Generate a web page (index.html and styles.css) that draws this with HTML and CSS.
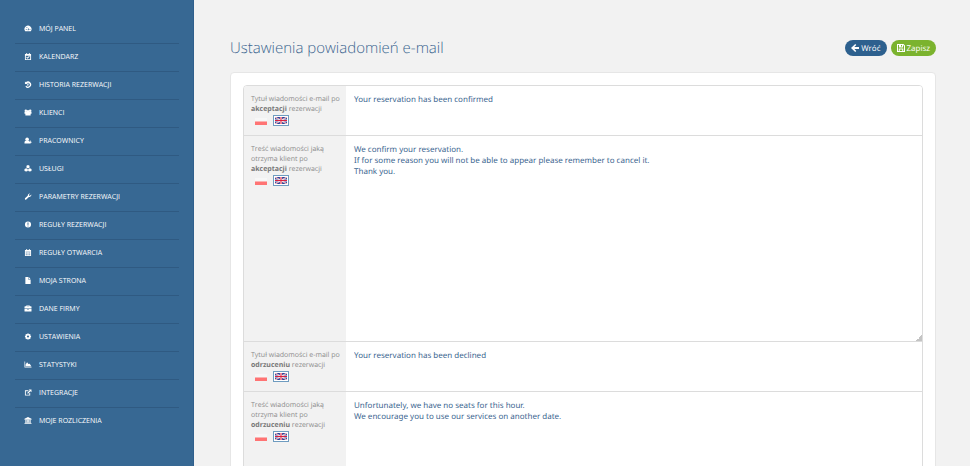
FILE: index.html
```html
<!DOCTYPE html>
<html lang="pl">
<head>
  <meta charset="UTF-8">
  <meta name="viewport" content="width=device-width, initial-scale=1.0">
  <title>Ustawienia powiadomień e-mail</title>
  <link rel="stylesheet" href="styles.css">
</head>
<body>
  <!-- Shared flags -->
  <svg class="defs" width="0" height="0" aria-hidden="true">
    <symbol id="flag-pl" viewBox="0 0 12 8" preserveAspectRatio="none">
      <path fill="#f7f7f7" d="M0 0h12v4H0z"/>
      <path fill="#ff7474" d="M0 4h12v4H0z"/>
    </symbol>
    <symbol id="flag-gb" viewBox="0 0 12 7">
      <path fill="#2b3f96" d="M0 0h12v7H0z"/>
      <path stroke="#fff" stroke-width="1.2" d="M0 0l12 7M12 0L0 7"/>
      <path stroke="#d83a55" stroke-width=".5" d="M0 0l12 7M12 0L0 7"/>
      <path stroke="#fff" stroke-width="2.2" d="M6 0v7M0 3.500h12"/>
      <path stroke="#d8203f" stroke-width="1.1" d="M6 0v7M0 3.500h12"/>
    </symbol>
  </svg>

  <div class="layout">
    <nav class="sidebar">
      <ul class="menu">
        <li><a href="#"><svg class="icon" viewBox="0 0 16 16"><path fill-rule="evenodd" d="M1.500 14A8 8 0 1 1 14.500 14zM7 12h2.500l1-6-3 4zM3 9v2h2V9zM4.500 5v2h2V5zM11.500 9v2h2V9z"/></svg>MÓJ PANEL</a></li>
        <li><a href="#"><svg class="icon" viewBox="0 0 16 16"><path fill-rule="evenodd" d="M1 2h3V0h2v2h4V0h2v2h3v14H1zM3 6v8h10V6zM4 10l1.500-1.500L7 10l3.500-3.500L12 8l-5 5z"/></svg>KALENDARZ</a></li>
        <li><a href="#"><svg class="icon" viewBox="0 0 16 16"><path d="M1 1l2 2A7.200 7.200 0 1 1 2 12.500l2.200-1.700A4.300 4.300 0 1 0 5.200 5.200L7 7H1zM7 5h2.200v5.200H5.500V8H7z"/></svg>HISTORIA REZERWACJI</a></li>
        <li><a href="#"><svg class="icon" viewBox="0 0 16 16"><circle cx="3" cy="4" r="2.800"/><circle cx="13" cy="4" r="2.800"/><circle cx="8" cy="6" r="3.700"/><path d="M0 6h16v5h-2v4H2v-4H0z"/></svg>KLIENCI</a></li>
        <li><a href="#"><svg class="icon" viewBox="0 0 16 16"><circle cx="6" cy="5" r="4"/><path d="M0 15v-3q0-4 4-4h4q3 0 3 3h1V8h2v3h2v2h-2v2z"/></svg>PRACOWNICY</a></li>
        <li><a href="#"><svg class="icon" viewBox="0 0 16 16"><path d="M8 0l3.500 1.500V6L8 7.500 4.500 6V1.500zM3.800 7.500L7.500 9v4.500L3.800 15 0 13.500V9zM12.200 7.500L16 9v4.500L12.200 15l-3.700-1.500V9z"/></svg>USŁUGI</a></li>
        <li><a href="#"><svg class="icon" viewBox="0 0 16 16"><path d="M1 12l6.500-6A4.700 4.700 0 0 1 13 1l-3 3 .5 2 2 .5 3-3A4.700 4.700 0 0 1 10 9l-6 6q-2 1-3-1z"/></svg>PARAMETRY REZERWACJI</a></li>
        <li><a href="#"><svg class="icon" viewBox="0 0 16 16"><path fill-rule="evenodd" d="M8 1a7 7 0 1 1 0 14A7 7 0 0 1 8 1zM6.800 3.500l.4 5.500h1.600l.4-5.500zM7 10.500v2h2v-2z"/></svg>REGUŁY REZERWACJI</a></li>
        <li><a href="#"><svg class="icon" viewBox="0 0 16 16"><path fill-rule="evenodd" d="M1 2h3V0h2v2h4V0h2v2h3v14H1zM2.500 5.500v1h11v-1zM3 8v2h2V8zM7 8v2h2V8zM11 8v2h2V8zM3 12v2h2v-2zM7 12v2h2v-2zM11 12v2h2v-2z"/></svg>REGUŁY OTWARCIA</a></li>
        <li><a href="#"><svg class="icon" viewBox="0 0 16 16"><path d="M2 0h7v6h5v10H2zM10 0l4 5h-4z"/></svg>MOJA STRONA</a></li>
        <li><a href="#"><svg class="icon" viewBox="0 0 16 16"><path fill-rule="evenodd" d="M4 3V1h8v2h3q1 0 1 1v4H0V4q0-1 1-1zM6 2.500V3h4v-.5zM0 9h6v1h4V9h6v5q0 1-1 1H1q-1 0-1-1z"/></svg>DANE FIRMY</a></li>
        <li><a href="#"><svg class="icon" viewBox="0 0 16 16"><path fill-rule="evenodd" d="M6.500 1h3l.5 2 2-1 2 2-1 2 2 .5v3l-2 .5 1 2-2 2-2-1-.5 2h-3L6 13l-2 1-2-2 1-2-2-.5v-3L3 6 2 4l2-2 2 1zM8 5.500a2.500 2.500 0 1 0 0 5 2.500 2.500 0 0 0 0-5z"/></svg>USTAWIENIA</a></li>
        <li><a href="#"><svg class="icon" viewBox="0 0 16 16"><path d="M0 1h1.500v12H16v2H0zM2.500 12V8L6 3l3 4 3-1 3.500 6z"/></svg>STATYSTYKI</a></li>
        <li><a href="#"><svg class="icon" viewBox="0 0 16 16"><path d="M9 3H1v12h12V9h-2v4H3V5h6zM9.500 1H16v6.500l-2.300-2.300L8 11 6 9l5.800-5.700z"/></svg>INTEGRACJE</a></li>
        <li><a href="#"><svg class="icon" viewBox="0 0 16 16"><path d="M8 0l8 4v2H0V4zM2 7h2.500v5h1V7H7.500v5h1V7h2v5h1V7H14v5h1v1H1v-1h1zM0 14h16v2H0z"/></svg>MOJE ROZLICZENIA</a></li>
      </ul>
    </nav>

    <main class="content">
      <header class="page-header">
        <h1>Ustawienia powiadomień e-mail</h1>
        <div class="actions">
          <button type="button" class="btn btn-back"><svg class="btn-icon" viewBox="0 0 16 16"><path d="M8.500 0L0 8l8.500 8 2-2-3.800-4H16V6H6.700l3.800-4z"/></svg>Wróć</button>
          <button type="submit" form="notifications" class="btn btn-save"><svg class="btn-icon" viewBox="0 0 16 16"><path fill-rule="evenodd" d="M0 0h13l3 3v13H0zM2 2v12h1.500V9h9v5H14V4l-2-2v5H4V2zM8 2v3h2V2zM5.500 11v3h5v-3z"/></svg>Zapisz</button>
        </div>
      </header>

      <form class="panel" id="notifications">
        <div class="fields">
          <div class="row">
            <div class="side">
              <label for="accept-title">Tytuł wiadomości e-mail po <b>akceptacji</b> rezerwacji</label>
              <div class="langs">
                <button type="button" class="lang" aria-label="Polski"><svg><use href="#flag-pl"/></svg></button>
                <button type="button" class="lang active" aria-label="English"><svg><use href="#flag-gb"/></svg></button>
              </div>
            </div>
            <input type="text" class="field" id="accept-title" value="Your reservation has been confirmed">
          </div>
          <div class="row">
            <div class="side">
              <label for="accept-body">Treść wiadomości jaką otrzyma klient po <b>akceptacji</b> rezerwacji</label>
              <div class="langs">
                <button type="button" class="lang" aria-label="Polski"><svg><use href="#flag-pl"/></svg></button>
                <button type="button" class="lang active" aria-label="English"><svg><use href="#flag-gb"/></svg></button>
              </div>
            </div>
            <textarea class="field" id="accept-body" rows="17">We confirm your reservation.
If for some reason you will not be able to appear please remember to cancel it.
Thank you.</textarea>
          </div>
          <div class="row">
            <div class="side">
              <label for="decline-title">Tytuł wiadomości e-mail po <b>odrzuceniu</b> rezerwacji</label>
              <div class="langs">
                <button type="button" class="lang" aria-label="Polski"><svg><use href="#flag-pl"/></svg></button>
                <button type="button" class="lang active" aria-label="English"><svg><use href="#flag-gb"/></svg></button>
              </div>
            </div>
            <input type="text" class="field" id="decline-title" value="Your reservation has been declined">
          </div>
          <div class="row">
            <div class="side">
              <label for="decline-body">Treść wiadomości jaką otrzyma klient po <b>odrzuceniu</b> rezerwacji</label>
              <div class="langs">
                <button type="button" class="lang" aria-label="Polski"><svg><use href="#flag-pl"/></svg></button>
                <button type="button" class="lang active" aria-label="English"><svg><use href="#flag-gb"/></svg></button>
              </div>
            </div>
            <textarea class="field" id="decline-body" rows="17">Unfortunately, we have no seats for this hour.
We encourage you to use our services on another date.</textarea>
          </div>
        </div>
      </form>
    </main>
  </div>
</body>
</html>
```
FILE: styles.css
```css
* {
  box-sizing: border-box;
}

body {
  margin: 0;
  font-family: 'Open Sans', sans-serif;
  text-rendering: geometricPrecision;
  background: #f2f2f2;
  color: #3c6690;
}

.defs {
  position: absolute;
}

.layout {
  display: flex;
  height: 100vh;
}

.sidebar {
  width: 20%;
  flex-shrink: 0;
  padding: 16px 14px 0 15px;
  background: #376893;
  border-right: 1px solid #2f5f8c;
}

.menu {
  margin: 0;
  padding: 0;
  list-style: none;
}

.menu li {
  height: 28px;
  border-bottom: 1px solid #2f5a82;
}

.menu li:last-child {
  border-bottom: none;
}

.menu a {
  display: flex;
  align-items: center;
  gap: 7px;
  height: 26px;
  padding: 2px 0 0 9px;
  color: #ffffff;
  font-size: 7px;
  line-height: 10px;
  text-decoration: none;
}

.icon {
  width: 8px;
  height: 7px;
  margin-bottom: 3px;
  fill: #ffffff;
}

.content {
  flex: 1;
  min-width: 0;
  padding: 36px 34px 0 36px;
  overflow: hidden;
}

.page-header {
  display: flex;
  justify-content: space-between;
  align-items: center;
  height: 24px;
  margin-bottom: 12px;
}

h1 {
  margin: 0;
  font-size: 15px;
  font-weight: 300;
  line-height: 22px;
}

.actions {
  display: flex;
  gap: 4px;
}

.btn {
  display: flex;
  align-items: center;
  gap: 2px;
  height: 16px;
  padding: 0 6px;
  border: none;
  border-radius: 8px;
  color: #ffffff;
  font-family: inherit;
  font-size: 8px;
  text-rendering: inherit;
  cursor: pointer;
}

.btn-back {
  background: #2d608e;
}

.btn-save {
  background: #7bb32e;
}

.btn-icon {
  width: 8px;
  height: 8px;
  fill: #ffffff;
}

.panel {
  padding: 12px;
  background: #ffffff;
  border: 1px solid #e6e6e6;
  border-radius: 4px;
}

.fields {
  border: 1px solid #dcdcdc;
  border-radius: 4px;
  overflow: hidden;
}

.row {
  display: flex;
  min-height: 50px;
  border-bottom: 1px solid #dcdcdc;
}

.row:last-child {
  border-bottom: none;
}

.side {
  width: 102px;
  flex-shrink: 0;
  padding: 9px 3px 0 7px;
  background: #f2f2f2;
  color: #8c8c8c;
  font-size: 7px;
  line-height: 10px;
}

.side label {
  display: block;
}

.side b {
  color: #777777;
}

.langs {
  display: flex;
  gap: 3px;
  padding: 0 0 0 3px;
}

.lang {
  display: flex;
  width: 16px;
  height: 11px;
  padding: 2px 1px 0 0;
  border: 1px solid transparent;
  background: none;
  cursor: pointer;
}

.lang svg {
  width: 12px;
  height: 7px;
}

.lang.active {
  padding: 1px;
  border-color: #6f9cc0;
  background: #ffffff;
}

.field {
  display: block;
  flex: 1;
  min-width: 0;
  margin: 0;
  padding: 8px 8px 6px;
  border: none;
  outline: none;
  background: #ffffff;
  color: #3c6690;
  font-family: 'Noto Sans', 'Open Sans', sans-serif;
  font-size: 8px;
  line-height: 11px;
  text-rendering: inherit;
}

input.field {
  align-self: flex-start;
}

textarea.field {
  min-height: 205px;
  resize: both;
}

textarea.field::-webkit-resizer {
  background: linear-gradient(135deg, transparent 80%, #c4c4c4 80%);
}
```
